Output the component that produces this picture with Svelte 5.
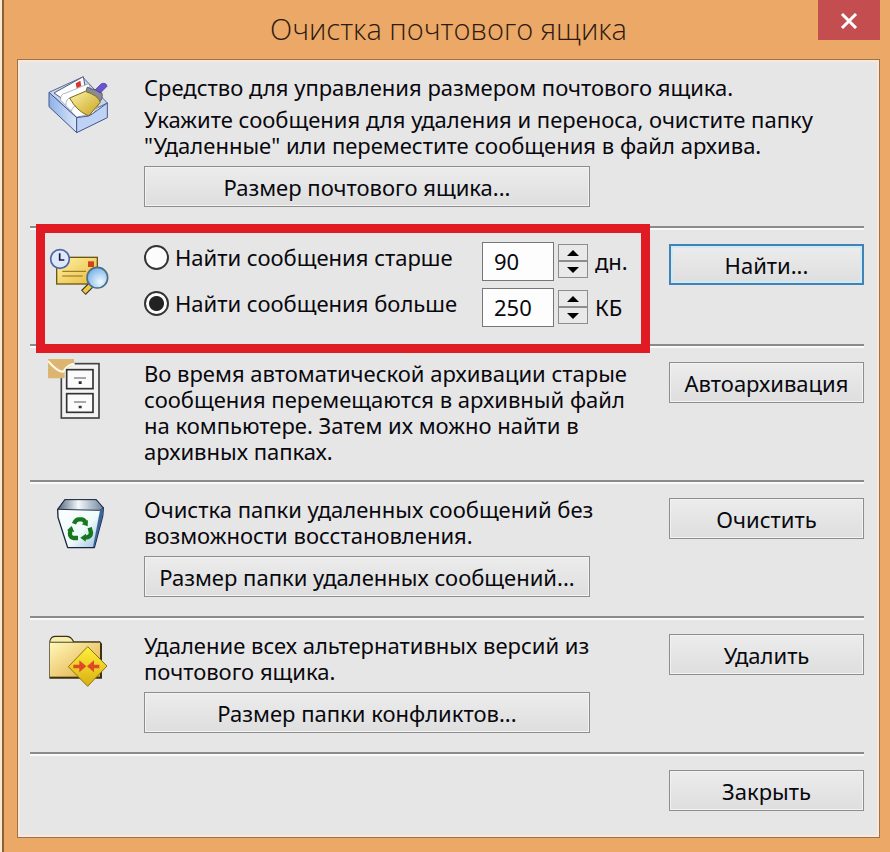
<script>
    let mode = $state("larger");
    let days = $state(90);
    let size = $state(250);
</script>

<svelte:head>
    <title>Очистка почтового ящика</title>
</svelte:head>

{#snippet arrow(up)}
    <svg class="arrow" viewBox="0 0 12 6" aria-hidden="true">
        <path d={up ? "M0 6 L6 0 L12 6 Z" : "M0 0 L6 6 L12 0 Z"} />
    </svg>
{/snippet}

<div class="window">
    <header>
        <h1>Очистка почтового ящика</h1>
        <button class="close" aria-label="Закрыть окно">
            <svg viewBox="0 0 18 16" aria-hidden="true">
                <path d="M2 1 L16 15 M16 1 L2 15" />
            </svg>
        </button>
    </header>

    <main>
        <section class="intro">
            <svg class="icon" viewBox="0 45 300 192" aria-hidden="true">
                <defs>
                    <linearGradient id="tray" x1="0" x2="1">
                        <stop offset="0" stop-color="#8fb0e6" />
                        <stop offset="1" stop-color="#dbe7fb" />
                    </linearGradient>
                    <linearGradient id="pan" x1="0" y1="0" x2="1" y2="1">
                        <stop offset="0" stop-color="#fbf3a8" />
                        <stop offset="1" stop-color="#c9a11c" />
                    </linearGradient>
                </defs>
                <path d="M57 94 L158 48 L232 126 L140 170 Z" fill="#c7d5ef" stroke="#5a6c9c" stroke-width="3" />
                <path d="M72 96 L160 47 L166 80 L98 114 Z" fill="#fff" stroke="#55607c" stroke-width="3" />
                <path d="M137 67 l14 -8 3 16 -14 7z" fill="#d8342c" />
                <path d="M92 118 Q90 98 108 96 L176 68 L186 96 L108 134 Z" fill="#fff" stroke="#8a93ab" stroke-width="2" />
                <path d="M108 134 Q106 112 124 110 L190 88 L204 140 L126 152 Z" fill="#fff" stroke="#8a93ab" stroke-width="2" />
                <path d="M124 152 Q126 136 138 136 L204 134 L190 158 L140 168 Z" fill="#fff" stroke="#8a93ab" stroke-width="2" />
                <path d="M172 78 Q166 90 170 96 L206 124 Q220 116 216 96 Q196 84 186 84 Z" fill="#8a8a92" stroke="#3a3c4a" stroke-width="2" />
                <path d="M119 111 L166 91 Q206 104 211 124 L176 165 Q140 150 119 111 Z" fill="url(#pan)" stroke="#7a6a20" stroke-width="3" />
                <path d="M196 86 L214 68 Q229 64 231 76 L211 96 Z" fill="#6a55d0" stroke="#3d2f91" stroke-width="2" />
                <path d="M57 94 L140 170 V215 L57 137 Z" fill="url(#tray)" stroke="#43578c" stroke-width="3" />
                <path d="M140 170 L176 165 L188 158 L232 126 V170 L140 215 Z" fill="#bdd2f5" stroke="#43578c" stroke-width="3" />
            </svg>
            <div class="text wide">
                <p>Средство для управления размером почтового ящика.</p>
                <p>
                    Укажите сообщения для удаления и переноса, очистите папку
                    "Удаленные" или переместите сообщения в файл архива.
                </p>
            </div>
            <div class="text">
                <button class="btn long">Размер почтового ящика...</button>
            </div>
        </section>

        <section class="find">
            <svg class="icon" viewBox="0 75 300 192" aria-hidden="true">
                <defs>
                    <linearGradient id="letter" x1="0" y1="0" x2="1" y2="1">
                        <stop offset="0" stop-color="#fff3a6" />
                        <stop offset="1" stop-color="#e8b93c" />
                    </linearGradient>
                    <radialGradient id="lens" cx="0.65" cy="0.7" r="0.7">
                        <stop offset="0" stop-color="#eef9ff" />
                        <stop offset="1" stop-color="#7db4e8" />
                    </radialGradient>
                </defs>
                <rect x="80" y="115" width="122" height="80" fill="url(#letter)" stroke="#6b5716" stroke-width="4" />
                <path d="M97 157 H168 M97 171 H158" stroke="#8a6d1c" stroke-width="3" />
                <rect x="174" y="127" width="18" height="17" fill="#cf4418" />
                <path d="M182 199 L160 221" stroke="#3f3a20" stroke-width="20" />
                <path d="M181 200 L162 219" stroke="#f0c94c" stroke-width="13" />
                <circle cx="202" cy="176" r="31" fill="url(#lens)" stroke="#4c6f86" stroke-width="5" />
                <circle cx="90" cy="120" r="28" fill="#dfe8fa" stroke="#4f66a6" stroke-width="5" />
                <path d="M89 103 V123 H103" fill="none" stroke="#161d3c" stroke-width="5" />
            </svg>
            <div class="text">
                <div class="query">
                    <label>
                        <input type="radio" name="mode" value="older" bind:group={mode} />
                        Найти сообщения старше
                    </label>
                    <input class="number" type="text" aria-label="Возраст в днях" bind:value={days} />
                    <div class="spin">
                        <button aria-label="Больше дней" onclick={() => days++}>{@render arrow(true)}</button>
                        <button aria-label="Меньше дней" onclick={() => days--}>{@render arrow(false)}</button>
                    </div>
                    <span>дн.</span>
                </div>
                <div class="query">
                    <label>
                        <input type="radio" name="mode" value="larger" bind:group={mode} />
                        Найти сообщения больше
                    </label>
                    <input class="number" type="text" aria-label="Размер в килобайтах" bind:value={size} />
                    <div class="spin">
                        <button aria-label="Увеличить размер" onclick={() => size++}>{@render arrow(true)}</button>
                        <button aria-label="Уменьшить размер" onclick={() => size--}>{@render arrow(false)}</button>
                    </div>
                    <span>КБ</span>
                </div>
            </div>
            <button class="btn default">Найти...</button>
            <div class="highlight"></div>
        </section>

        <section>
            <svg class="icon" viewBox="0 69 300 192" aria-hidden="true">
                <rect x="94" y="74" width="113" height="163" fill="#f4f3f3" stroke="#444" stroke-width="5" />
                <path d="M54 60 H132 V76 L104 92 V118 H54 Z" fill="#dcb670" />
                <path d="M54 66 Q84 100 100 98 Q112 76 134 74" fill="none" stroke="#fff8ec" stroke-width="6" />
                <rect x="110" y="92" width="79" height="57" fill="#fbfbfb" stroke="#333" stroke-width="5" />
                <rect x="110" y="164" width="79" height="56" fill="#fbfbfb" stroke="#333" stroke-width="5" />
                <path d="M132 117 H168 M132 189 H168" stroke="#555" stroke-width="3" />
                <path d="M146 127 h9 v8 h-9z M146 200 h9 v8 h-9z" fill="#333" />
            </svg>
            <div class="text">
                <p>
                    Во время автоматической архивации старые сообщения
                    перемещаются в архивный файл на компьютере. Затем их можно
                    найти в архивных папках.
                </p>
            </div>
            <button class="btn">Автоархивация</button>
        </section>

        <section>
            <svg class="icon" viewBox="0 42 300 192" aria-hidden="true">
                <defs>
                    <linearGradient id="bin" x1="0" y1="0" x2="1" y2="1">
                        <stop offset="0" stop-color="#fff" />
                        <stop offset="0.6" stop-color="#eefafb" />
                        <stop offset="1" stop-color="#8fb8dd" />
                    </linearGradient>
                    <linearGradient id="rim" x1="0" x2="1">
                        <stop offset="0" stop-color="#53667c" />
                        <stop offset="0.45" stop-color="#f4f8fc" />
                        <stop offset="1" stop-color="#70849c" />
                    </linearGradient>
                </defs>
                <path d="M83 76 L105 47 H198 L220 72 L218 96 L193 191 H113 L84 100 Z" fill="url(#bin)" stroke="#18243c" stroke-width="4" stroke-linejoin="round" />
                <path d="M84 76 L105 47 H198 L220 72 L208 79 Z" fill="url(#rim)" stroke="#26344c" stroke-width="3" />
                <path d="M210 79 L189 189 H193 L218 96 L220 72 Z" fill="#3c649c" />
                <g fill="none" stroke="#16781c" stroke-width="13">
                    <path d="M132 119 Q137 106 147 106 H156 Q162 107 166 115" />
                    <path d="M179 131 L183 146 Q183 159 164 161" />
                    <path d="M144 162 H130 Q115 158 122 138" />
                </g>
                <g fill="#16781c">
                    <path d="M155 121 L174 108 L173 127 Z" />
                    <path d="M168 149 L151 161 L167 173 Z" />
                    <path d="M111 139 L125 126 L133 144 Z" />
                </g>
            </svg>
            <div class="text">
                <p>Очистка папки удаленных сообщений без возможности восстановления.</p>
                <button class="btn long">Размер папки удаленных сообщений...</button>
            </div>
            <button class="btn">Очистить</button>
        </section>

        <section>
            <svg class="icon" viewBox="0 45 300 192" aria-hidden="true">
                <defs>
                    <linearGradient id="folder" x1="0" y1="0" x2="1" y2="1">
                        <stop offset="0" stop-color="#fff8b8" />
                        <stop offset="1" stop-color="#e2aa44" />
                    </linearGradient>
                    <linearGradient id="sign" x1="0" y1="0" x2="0" y2="1">
                        <stop offset="0" stop-color="#fff03c" />
                        <stop offset="1" stop-color="#d9ae12" />
                    </linearGradient>
                </defs>
                <path d="M58 66 Q62 50 76 50 H112 Q126 52 132 67 H210 L216 74 V179 H58 Z" fill="#3d3210" />
                <path d="M61 67 Q64 54 77 54 H111 Q122 55 129 68 H61 Z" fill="#f6eeb0" />
                <rect x="60" y="71" width="150" height="102" fill="url(#folder)" />
                <path d="M173 83 L231 141 L173 202 L115 143 Z" fill="url(#sign)" stroke="#8a7412" stroke-width="3" stroke-linejoin="round" />
                <path d="M130 137 H148 V124 L169 142 L148 160 V148 H130 Z" fill="#df4a25" />
                <path d="M208 137 H192 V124 L171 142 L192 160 V148 H208 Z" fill="#df4a25" />
            </svg>
            <div class="text">
                <p>Удаление всех альтернативных версий из почтового ящика.</p>
                <button class="btn long">Размер папки конфликтов...</button>
            </div>
            <button class="btn">Удалить</button>
        </section>

        <footer>
            <button class="btn">Закрыть</button>
        </footer>
    </main>
</div>

<style>
    :global(body) {
        margin: 0;
        background: #fde9cf;
    }

    .window {
        box-sizing: border-box;
        min-height: 100vh;
        margin-left: 2px;
        padding: 0 10px 13px 13px;
        border-left: 2px solid #8a5f3c;
        background: #eba866;
        color: #08080e;
        font-family: "Noto Sans", "Open Sans", sans-serif;
        font-size: 22px;
        line-height: 26px;
    }

    header {
        display: grid;
        grid-template-columns: 62px 1fr 62px;
        align-items: start;
        height: 59px;
    }

    h1 {
        grid-column: 2;
        margin: 0;
        padding-top: 9px;
        color: #2e1a10;
        font-family: "Open Sans", "Noto Sans", sans-serif;
        font-size: 29px;
        font-weight: 300;
        line-height: 40px;
        text-align: center;
    }

    button {
        padding: 0;
        color: inherit;
        font: inherit;
    }

    .close {
        display: flex;
        justify-content: center;
        height: 40px;
        padding-top: 13px;
        border: none;
        background: #c44d50;
    }

    .close svg {
        width: 18px;
        height: 16px;
    }

    .close path {
        stroke: #fff;
        stroke-width: 3;
    }

    main {
        padding: 0 15px 26px 12px;
        border: 1px solid #9a7250;
        background: #e7e6e6;
        box-shadow: inset 0 0 0 2px #fbe8d6;
    }

    section {
        box-sizing: border-box;
        display: grid;
        grid-template-columns: 114px 1fr 195px;
        align-items: start;
        align-content: start;
        position: relative;
        min-height: 136px;
        padding: 14px 0 8px;
    }

    section + section,
    footer {
        border-top: 2px solid #8b8b8b;
        box-shadow: inset 0 2px #fafafa;
    }

    .intro {
        min-height: 166px;
    }

    .find {
        min-height: 118px;
    }

    .icon {
        width: 100px;
        height: 64px;
        margin-top: 2px;
        overflow: visible;
    }

    .intro .icon {
        grid-row: 1 / 3;
    }

    .wide {
        grid-column: 2 / 4;
    }

    .wide + .text {
        grid-column: 2;
    }

    .text {
        padding-right: 32px;
    }

    .text.wide {
        padding-right: 0;
    }

    p {
        margin: 0;
    }

    p + p {
        margin-top: 6px;
    }

    .btn {
        box-sizing: border-box;
        width: 100%;
        height: 41px;
        margin-top: 2px;
        border: 1px solid #8d8d8d;
        background: linear-gradient(#ececec, #dedede);
        box-shadow: inset 0 0 0 1px #f3f3f3;
    }

    .btn.long {
        display: block;
        max-width: 446px;
        margin-top: 8px;
    }

    .btn.default {
        border: 2px solid #4582b4;
        box-shadow: inset 0 0 0 2px #cdeafa;
    }

    .query {
        display: flex;
        align-items: center;
        height: 38px;
    }

    .query + .query {
        margin-top: 8px;
    }

    .query label {
        display: flex;
        align-items: center;
        align-self: flex-start;
        width: 338px;
        height: 30px;
        white-space: nowrap;
    }

    .query input[type="radio"] {
        appearance: none;
        box-sizing: border-box;
        width: 25px;
        height: 25px;
        margin: 0 6px 0 0;
        border: 2px solid #333;
        border-radius: 50%;
        background: #fcfcfc;
    }

    .query input[type="radio"]:checked {
        background: radial-gradient(circle, #222 7px, #fcfcfc 8px);
    }

    .number {
        box-sizing: border-box;
        width: 72px;
        height: 39px;
        padding: 0 0 0 11px;
        border: 1px solid #777;
        border-radius: 0;
        background: #fdfdfd;
        color: inherit;
        font: inherit;
    }

    .spin {
        display: flex;
        flex-direction: column;
        width: 30px;
        margin: 0 7px 0 4px;
    }

    .spin button {
        display: flex;
        align-items: center;
        justify-content: center;
        box-sizing: border-box;
        height: 17px;
        border: 1px solid #8d8d8d;
        background: #e9e9e9;
    }

    .arrow {
        width: 12px;
        height: 6px;
    }

    /* red frame drawn over the search section */
    .highlight {
        position: absolute;
        inset: -4px 214px -9px 6px;
        border: 9px solid #e01b24;
        pointer-events: none;
        z-index: 1;
    }

    footer {
        display: flex;
        justify-content: flex-end;
        padding-top: 14px;
    }

    footer .btn {
        width: 195px;
    }
</style>
